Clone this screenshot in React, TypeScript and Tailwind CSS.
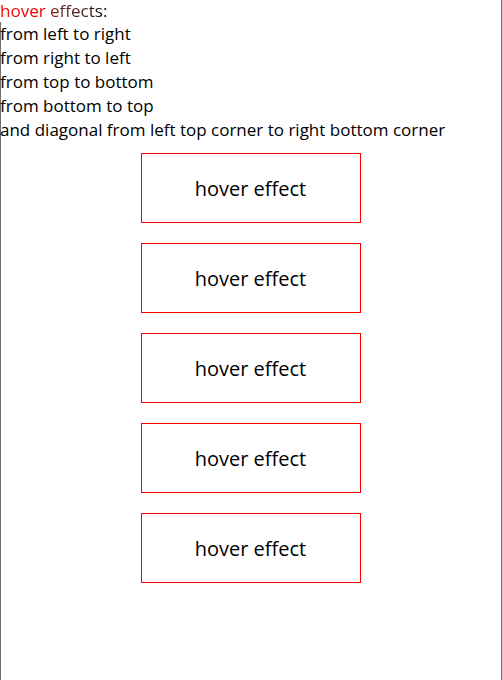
import React from "react";

export default function App() {
  const boxes = [0, 1, 2, 3, 4];
  return (
    <div className="min-h-[680px] w-[502px] bg-white border-r border-[#6e6e6e] text-black" style={{ fontFamily: '"Open Sans", sans-serif' }}>
      <div className="text-[17px] leading-[20px] h-[22px] pt-[1px]">
        <span className="bg-[linear-gradient(to_right,#ff0000_0%,#f00000_40%,#6a2a2a_55%,#3a1a1a_85%,#000000_100%)] bg-clip-text text-transparent">hover effects:</span>
      </div>
      <div className="border-l border-[#6e6e6e] min-h-[658px]">
        <div className="text-[17px] leading-[24px]">
          <div className="-ml-px">from left to right</div>
          <div className="-ml-px">from right to left</div>
          <div className="-ml-px">from top to bottom</div>
          <div className="-ml-px">from bottom to top</div>
          <div className="-ml-px">and diagonal from left top corner to right bottom corner</div>
        </div>
        <div className="flex flex-col items-center gap-[20px] pt-[11px] -ml-px">
          {boxes.map((i) => (
            <div key={i} className="w-[220px] h-[70px] border border-[#ff0000] flex items-center justify-center text-[20px] pt-[2px]">
              hover effect
            </div>
          ))}
        </div>
      </div>
    </div>
  );
}
